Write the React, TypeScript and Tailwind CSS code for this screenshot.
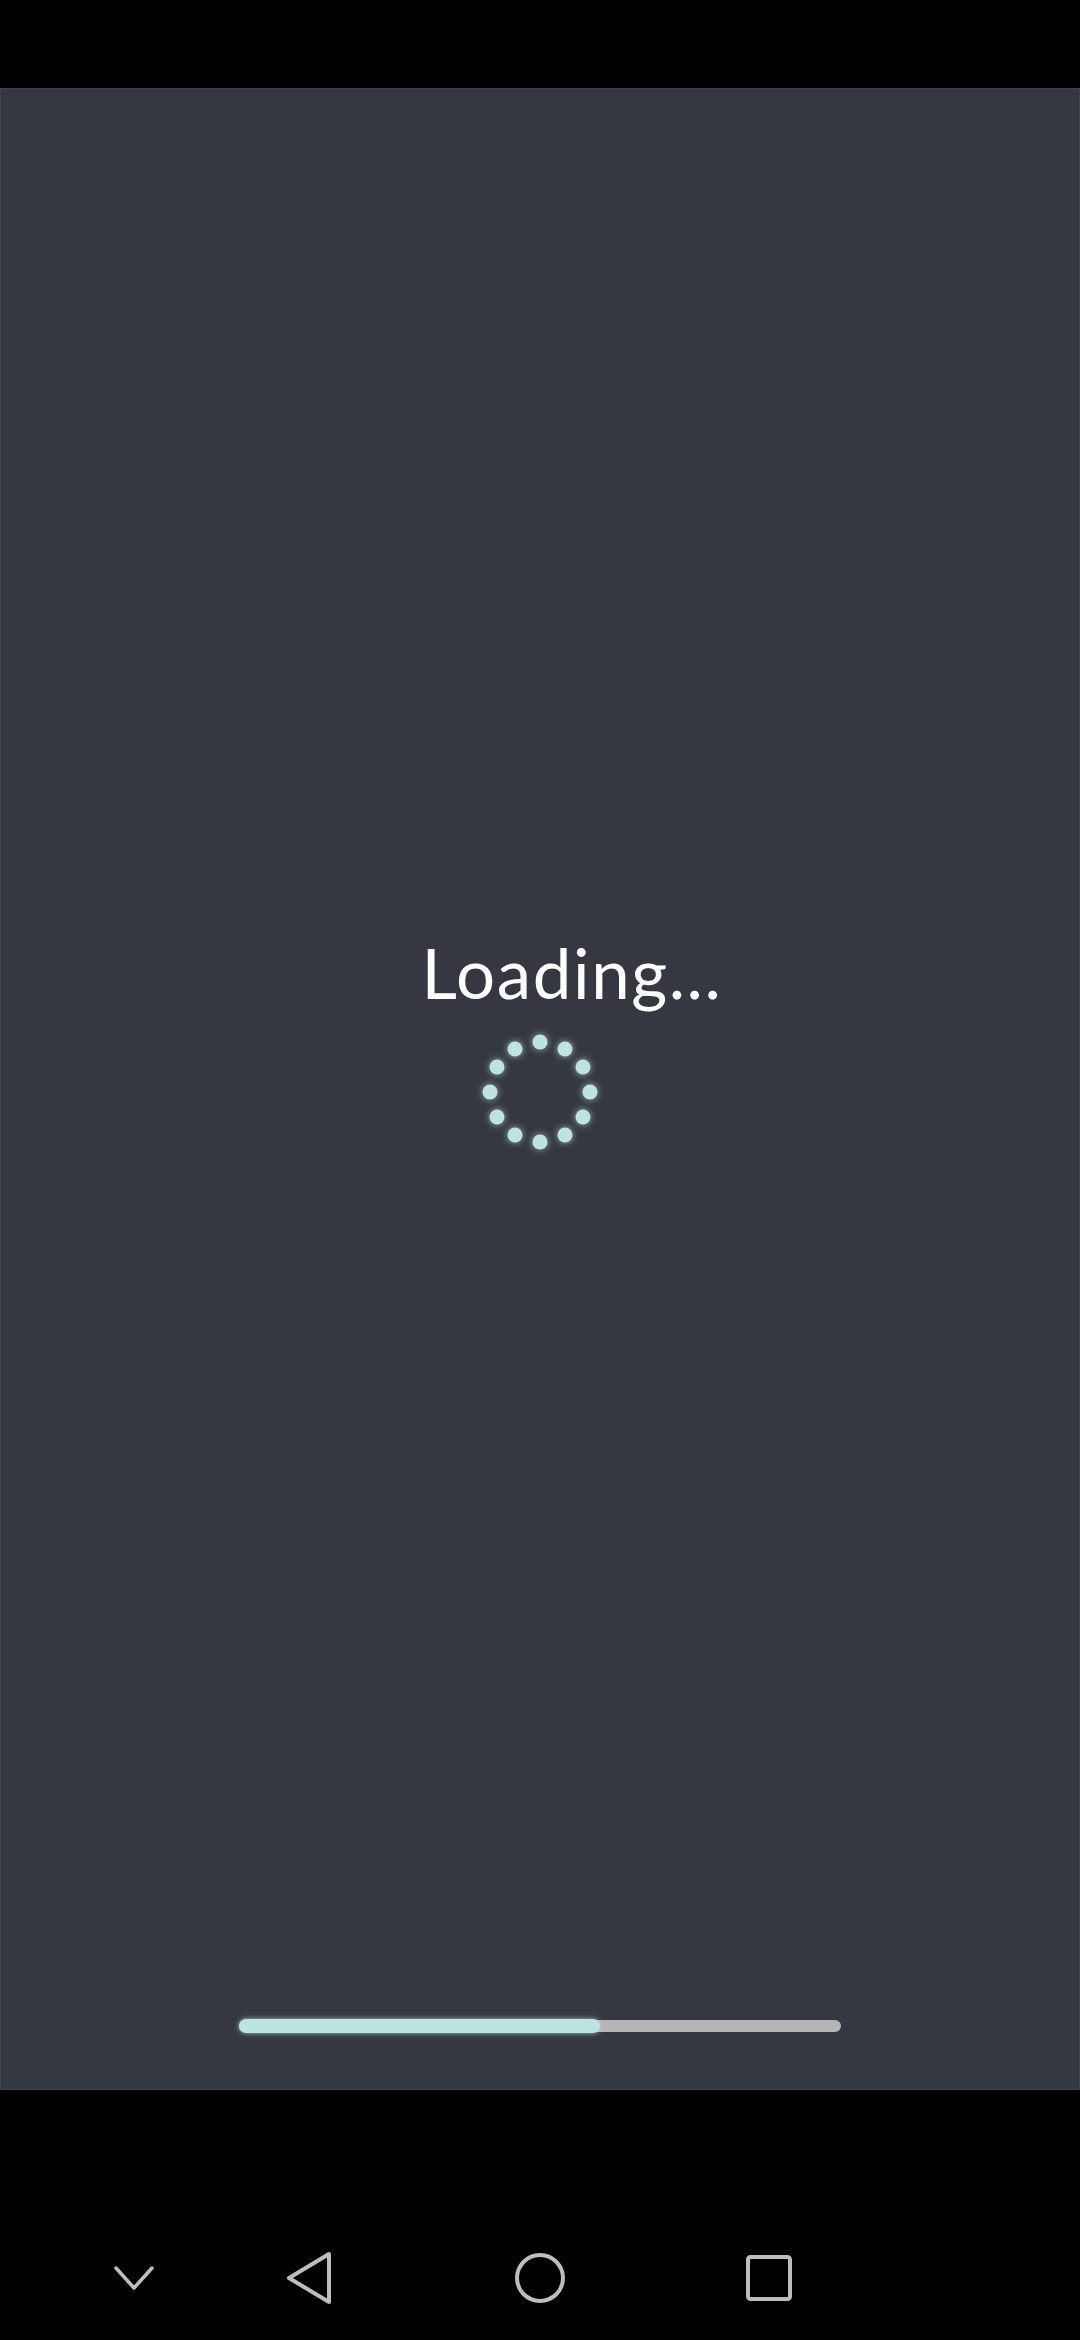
import React from "react";

// 12 dots evenly spaced on a ring, first one at the top
const DOTS = Array.from({ length: 12 }, (_, i) => {
  const a = (i * Math.PI) / 6;
  return { x: 57 + 50 * Math.sin(a), y: 57 - 50 * Math.cos(a) };
});

function Spinner() {
  return (
    <div className="relative h-[114px] w-[114px]">
      {DOTS.map((d, i) => (
        <span
          key={i}
          className="absolute h-[15px] w-[15px] -translate-x-1/2 -translate-y-1/2 rounded-full bg-[#bce4e0] shadow-[0_0_7px_rgba(188,228,224,0.75)]"
          style={{ left: d.x, top: d.y }}
        />
      ))}
    </div>
  );
}

function ProgressBar({ value }: { value: number }) {
  return (
    <div className="h-[12px] w-[602px] rounded-full bg-[#b5b5b5]">
      <div
        className="h-[14px] -translate-y-[1px] rounded-full bg-[#bce4e0] shadow-[0_0_5px_rgba(188,228,224,0.8)]"
        style={{ width: `${value}%` }}
      />
    </div>
  );
}

function NavBar() {
  const stroke = "#bdbdbd";
  return (
    <nav className="flex h-[250px] items-start bg-black pl-[94px] pt-[148px]">
      <div className="flex h-[80px] w-[80px] items-center justify-center">
        <svg width="42" height="26" viewBox="0 0 42 26" fill="none">
          <path d="M3 3 L21 23 L39 3" stroke={stroke} strokeWidth="3.5" strokeLinecap="round" strokeLinejoin="round" />
        </svg>
      </div>
      <div className="ml-[95px] flex h-[80px] w-[80px] items-center justify-center">
        <svg width="48" height="56" viewBox="0 0 48 56" fill="none">
          <path d="M4 28 L44 4 L44 52 Z" stroke={stroke} strokeWidth="4" strokeLinejoin="round" />
        </svg>
      </div>
      <div className="ml-[151px] flex h-[80px] w-[80px] items-center justify-center">
        <svg width="54" height="54" viewBox="0 0 54 54" fill="none">
          <circle cx="27" cy="27" r="23" stroke={stroke} strokeWidth="4" />
        </svg>
      </div>
      <div className="ml-[149px] flex h-[80px] w-[80px] items-center justify-center">
        <svg width="48" height="48" viewBox="0 0 48 48" fill="none">
          <rect x="3" y="3" width="42" height="42" rx="2.5" stroke={stroke} strokeWidth="4" />
        </svg>
      </div>
    </nav>
  );
}

export default function App() {
  return (
    <div className="flex h-[2340px] w-[1080px] flex-col bg-black font-['Lato','Liberation_Sans',sans-serif]">
      <div className="h-[88px] shrink-0 bg-black" />

      <main className="flex h-[2002px] flex-col items-center border-x border-t border-b border-[#41444e] bg-[#363841] pt-[849px] pb-[57px]">
        <h1 className="pl-[64px] text-[69px] leading-none font-normal tracking-[1.6px] text-white">Loading...</h1>
        <div className="mt-[28px]">
          <Spinner />
        </div>
        <div className="mt-auto">
          <ProgressBar value={60} />
        </div>
      </main>

      <NavBar />
    </div>
  );
}
